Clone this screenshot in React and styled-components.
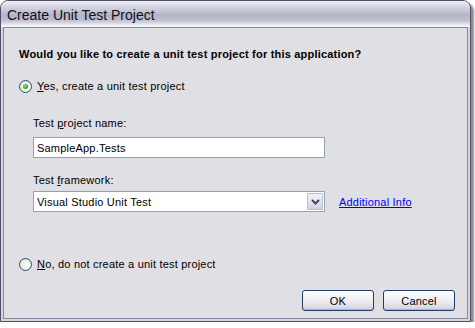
import React from 'react';
import styled, { createGlobalStyle } from 'styled-components';

const GlobalStyle = createGlobalStyle`
    html, body {
        margin: 0;
        padding: 0;
        background: #ffffff;
    }
    * {
        box-sizing: border-box;
    }
`;

const Window = styled.div`
    width: 471px;
    height: 322px;
    border: 1px solid #4f4f66;
    border-radius: 8px 8px 0 0;
    background: #d6d6e2;
    box-shadow: 3px 3px 2px rgba(0, 0, 0, 0.45);
    display: flex;
    flex-direction: column;
    overflow: hidden;
    font-family: "Liberation Sans", Arial, sans-serif;
    font-size: 11px;
    letter-spacing: 0.2px;
    color: #000;
`;

const TitleBar = styled.div`
    height: 26px;
    flex: none;
    display: flex;
    align-items: center;
    padding: 2px 0 0 6px;
    font-size: 14px;
    letter-spacing: 0;
    color: #101018;
    background: linear-gradient(to bottom, #eeeef4 0%, #d2d2e0 25%, #b4b4c8 55%, #c0c0d2 75%, #f4f4f8 96%);
`;

const Body = styled.div`
    flex: 1;
    margin: 0 2px 2px 2px;
    border: 1px solid #85859c;
    background: #e0dfe3;
    display: flex;
    flex-direction: column;
    padding: 19px 12px 7px 15px;
`;

const Question = styled.p`
    margin: 0;
    font-weight: bold;
    line-height: 14px;
`;

const RadioRow = styled.label`
    display: flex;
    align-items: center;
    gap: 5px;
    height: 14px;
    margin-top: ${({ $top }) => $top}px;
    line-height: 14px;
    white-space: nowrap;
`;

const RadioMark = styled.span`
    position: relative;
    width: 13px;
    height: 13px;
    flex: none;
    border-radius: 50%;
    border: 1px solid #1c5180;
    background: radial-gradient(circle at 65% 65%, #ffffff 0%, #ebeae4 60%, #d6d4cc 100%);

    &::after {
        content: '';
        display: ${({ $checked }) => ($checked ? 'block' : 'none')};
        position: absolute;
        left: 3px;
        top: 3px;
        width: 5px;
        height: 5px;
        border-radius: 50%;
        background: radial-gradient(circle at 40% 40%, #8fe08f 0%, #2fa72f 60%, #1b7f1b 100%);
    }
`;

const Indent = styled.div`
    margin-left: 14px;
    display: flex;
    flex-direction: column;
`;

const FieldLabel = styled.div`
    line-height: 14px;
    margin-top: ${({ $top }) => $top}px;
    margin-bottom: ${({ $bottom }) => $bottom}px;
`;

const TextBox = styled.div`
    width: 292px;
    height: 21px;
    border: 1px solid #8fa3bd;
    background: #fff;
    padding: 0 3px;
    display: flex;
    align-items: center;
`;

const SelectRow = styled.div`
    display: flex;
    align-items: center;
    gap: 14px;
`;

const SelectBox = styled.div`
    width: 292px;
    height: 21px;
    border: 1px solid #8fa3bd;
    background: #fff;
    display: flex;
    align-items: stretch;
`;

const SelectText = styled.span`
    flex: 1;
    padding-left: 3px;
    display: flex;
    align-items: center;
`;

const DropButton = styled.span`
    width: 16px;
    margin: 1px;
    border: 1px solid #b9c1cf;
    border-radius: 1px;
    background: linear-gradient(to bottom, #f2f2f6, #d2d2de);
    display: flex;
    align-items: center;
    justify-content: center;
`;

const InfoLink = styled.a`
    color: #0000ff;
    text-decoration: underline;
    cursor: pointer;
`;

const Spacer = styled.div`
    flex: 1;
`;

const ButtonRow = styled.div`
    display: flex;
    justify-content: flex-end;
    gap: 9px;
`;

const Button = styled.button`
    width: 72px;
    height: 21px;
    padding: 0;
    border: 1px solid #1f3f66;
    border-radius: 3px;
    background: linear-gradient(to bottom, #ffffff 0%, #f2f2f6 40%, #dcdce6 85%, #c8c8d8 100%);
    box-shadow: inset 0 -1px 0 #b6b6c8;
    font-family: inherit;
    font-size: 11px;
    letter-spacing: 0.2px;
    color: #000;
`;

const App = () => {
    return (
        <>
            <GlobalStyle />
            <Window>
                <TitleBar>Create Unit Test Project</TitleBar>
                <Body>
                    <Question>Would you like to create a unit test project for this application?</Question>

                    <RadioRow $top={18}>
                        <RadioMark $checked />
                        <span><u>Y</u>es, create a unit test project</span>
                    </RadioRow>

                    <Indent>
                        <FieldLabel $top={23} $bottom={7}>Test <u>p</u>roject name:</FieldLabel>
                        <TextBox>SampleApp.Tests</TextBox>
                        <FieldLabel $top={15} $bottom={4}>Test <u>f</u>ramework:</FieldLabel>
                        <SelectRow>
                            <SelectBox>
                                <SelectText>Visual Studio Unit Test</SelectText>
                                <DropButton>
                                    <svg width="9" height="6" viewBox="0 0 9 6">
                                        <path d="M1 1 L4.5 4.5 L8 1" fill="none" stroke="#3c4a66" strokeWidth="2" />
                                    </svg>
                                </DropButton>
                            </SelectBox>
                            <InfoLink>Additional Info</InfoLink>
                        </SelectRow>
                    </Indent>

                    <RadioRow $top={45}>
                        <RadioMark />
                        <span><u>N</u>o, do not create a unit test project</span>
                    </RadioRow>

                    <Spacer />

                    <ButtonRow>
                        <Button>OK</Button>
                        <Button>Cancel</Button>
                    </ButtonRow>
                </Body>
            </Window>
        </>
    );
};

export default App;
